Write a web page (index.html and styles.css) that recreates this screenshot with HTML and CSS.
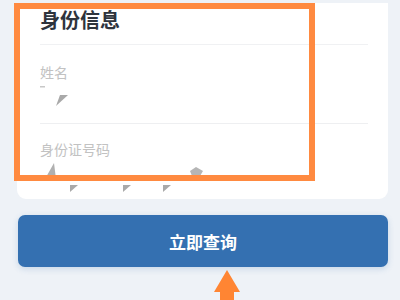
FILE: index.html
```html
<!DOCTYPE html>
<html lang="zh-CN">
<head>
    <meta charset="UTF-8">
    <meta name="viewport" content="width=device-width, initial-scale=1.0">
    <title>身份信息</title>
    <link rel="stylesheet" href="styles.css">
</head>
<body>
    <div class="page">
        <div class="card">
            <h2 class="card-title">身份信息</h2>
            <div class="field">
                <div class="field-label">姓名</div>
                <div class="field-value">
                    <svg width="60" height="28" viewBox="0 0 60 28">
                        <rect x="0" y="4" width="5" height="1.5" fill="#c8c8c8"/>
                        <polygon points="20,13 28,13 16,24" fill="#a9a9a9"/>
                    </svg>
                </div>
            </div>
            <div class="field">
                <div class="field-label">身份证号码</div>
                <div class="field-value">
                    <svg width="180" height="36" viewBox="0 0 180 36">
                        <polygon points="14,4 5,20 16,20" fill="#b0b0b0"/>
                        <polygon points="30,26 38,26 30,33" fill="#a9a9a9"/>
                        <polygon points="83,26 91,26 83,33" fill="#a9a9a9"/>
                        <polygon points="123,26 131,26 123,33" fill="#a9a9a9"/>
                        <polygon points="150,12 156,8 163,12 160,17 152,17" fill="#b5b5b5"/>
                    </svg>
                </div>
            </div>
        </div>
        <button class="query-button">立即查询</button>

        <div class="mark-box"></div>
        <svg class="mark-arrow" width="30" height="32" viewBox="0 0 30 32">
            <polygon points="15,0 28,22 22,22 22,32 8,32 8,22 2,22" fill="#ff8533"/>
        </svg>
    </div>
</body>
</html>
```

FILE: styles.css
```css
body {
    margin: 0;
    background-color: #eef2f7;
    font-family: "Noto Sans CJK SC", "Noto Sans", sans-serif;
}
.page {
    position: relative;
    padding: 3px 12px 0 17px;
    height: 297px;
    overflow: hidden;
}
.card {
    width: 371px;
    height: 196px;
    box-sizing: border-box;
    padding: 3px 20px 0 23px;
    background-color: #fff;
    border-radius: 0 0 9px 9px;
}
.card-title {
    margin: 0;
    font-size: 20px;
    line-height: 28px;
    font-weight: bold;
    color: #2e343d;
    padding-bottom: 10px;
    border-bottom: 1px solid #f0f1f3;
}
.field {
    padding-top: 17px;
}
.field + .field {
    border-top: 1px solid #eeeff1;
    padding-top: 15px;
}
.field-label {
    font-size: 14px;
    line-height: 20px;
    color: #c2c2c2;
}
.field-value {
    height: 41px;
}
.query-button {
    display: block;
    width: 370px;
    height: 52px;
    margin-top: 16px;
    margin-left: 1px;
    border: none;
    border-radius: 7px;
    background-color: #3470b1;
    color: #fff;
    font-family: "Noto Sans CJK SC", "Noto Sans", sans-serif;
    font-size: 17px;
    font-weight: bold;
    box-shadow: 0 2px 6px rgba(52, 112, 177, 0.2);
}
.mark-box {
    position: absolute;
    left: 14px;
    top: 3px;
    width: 289px;
    height: 166px;
    border: 6px solid #ff8a40;
}
.mark-arrow {
    position: absolute;
    left: 212px;
    top: 270px;
}
```
